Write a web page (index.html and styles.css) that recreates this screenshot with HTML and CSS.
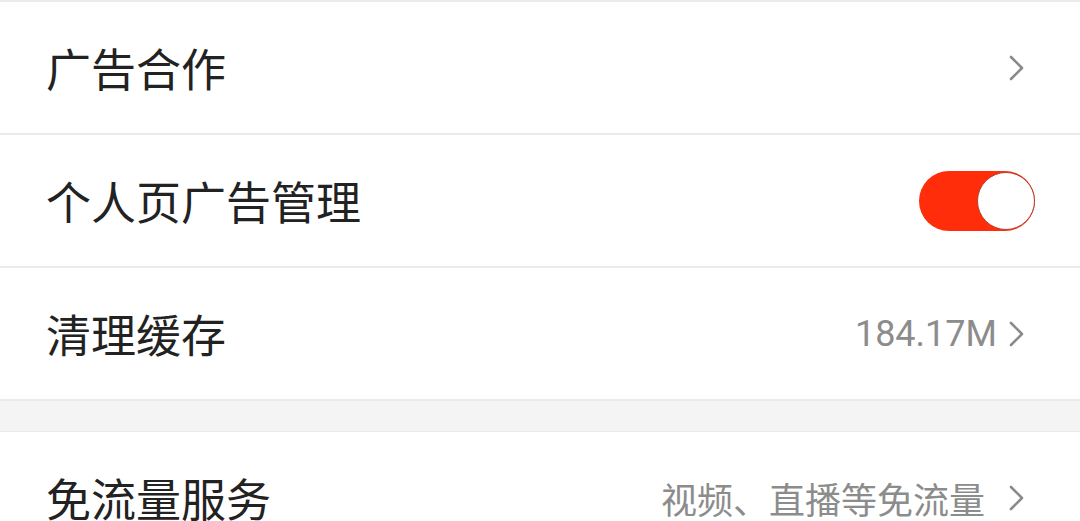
FILE: index.html
```html
<!DOCTYPE html>
<html lang="zh-CN">
<head>
    <meta charset="UTF-8">
    <meta name="viewport" content="width=device-width, initial-scale=1.0">
    <title>设置</title>
    <link rel="stylesheet" href="styles.css">
</head>
<body>
    <div class="group">
        <div class="row">
            <span class="label">广告合作</span>
            <span class="right">
                <svg class="arrow" viewBox="0 0 16 26"><polyline points="2,2 13,13 2,24"/></svg>
            </span>
        </div>
        <div class="row">
            <span class="label">个人页广告管理</span>
            <span class="switch on"><span class="knob"></span></span>
        </div>
        <div class="row">
            <span class="label">清理缓存</span>
            <span class="right">
                <span class="value num">184.17M</span>
                <svg class="arrow" viewBox="0 0 16 26"><polyline points="2,2 13,13 2,24"/></svg>
            </span>
        </div>
    </div>
    <div class="spacer"></div>
    <div class="group">
        <div class="row">
            <span class="label">免流量服务</span>
            <span class="right">
                <span class="value wide">视频、直播等免流量</span>
                <svg class="arrow" viewBox="0 0 16 26"><polyline points="2,2 13,13 2,24"/></svg>
            </span>
        </div>
    </div>
</body>
</html>
```

FILE: styles.css
```css
body {
    margin: 0;
    background-color: #ffffff;
    font-family: 'Noto Sans CJK SC', 'Noto Sans', sans-serif;
}
.group {
    background-color: #ffffff;
    border-top: 2px solid #ebebeb;
}
.row {
    display: flex;
    align-items: center;
    justify-content: space-between;
    height: 131px;
    padding: 0 46px 0 46px;
    border-bottom: 2px solid #ebebeb;
}
.label {
    font-size: 45px;
    color: #222222;
    line-height: 1;
}
.right {
    display: flex;
    align-items: center;
}
.value {
    color: #8c8c8c;
    line-height: 1;
}
.value.num {
    font-family: 'Roboto', 'Noto Sans CJK SC', sans-serif;
    font-size: 36px;
    margin-right: 12px;
}
.value.wide {
    font-size: 36px;
    margin-right: 24px;
}
.arrow {
    width: 16px;
    height: 26px;
    margin-right: 9px;
}
.arrow polyline {
    fill: none;
    stroke: #8a8a8a;
    stroke-width: 2.6;
    stroke-linecap: round;
    stroke-linejoin: round;
}
.switch {
    display: flex;
    justify-content: flex-end;
    align-items: center;
    width: 116px;
    height: 60px;
    border-radius: 30px;
    background-color: #ff2d0a;
    margin-right: -1px;
}
.knob {
    width: 56px;
    height: 56px;
    border-radius: 50%;
    background-color: #ffffff;
    border: 1px solid #b4402e;
}
.spacer {
    height: 30px;
    background-color: #f4f4f4;
}
.spacer + .group {
    border-top: 1px solid #ebebeb;
}
```
